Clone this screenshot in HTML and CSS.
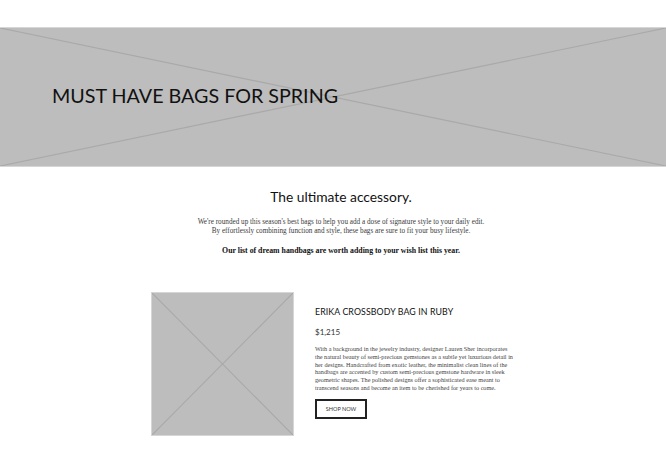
FILE: index.html
```html
<!DOCTYPE html>
<html>
<head>
<meta charset="utf-8">
<link rel="stylesheet" href="styles.css">
</head>
<body>
<header class="hero">
  <svg class="ph-lines" viewBox="0 0 100 100" preserveAspectRatio="none" aria-hidden="true">
    <line x1="0" y1="0" x2="100" y2="100" vector-effect="non-scaling-stroke"/>
    <line x1="100" y1="0" x2="0" y2="100" vector-effect="non-scaling-stroke"/>
  </svg>
  <h1 class="hero-title">MUST HAVE BAGS FOR SPRING</h1>
</header>

<section class="intro">
  <h2 class="intro-title">The ultimate accessory.</h2>
  <p class="intro-text">We're rounded up this season's best bags to help you add a dose of signature style to your daily edit.<br>By effortlessly combining function and style, these bags are sure to fit your busy lifestyle.</p>
  <p class="intro-bold">Our list of dream handbags are worth adding to your wish list this year.</p>
</section>

<section class="product">
  <div class="product-img">
    <svg class="ph-lines" viewBox="0 0 100 100" preserveAspectRatio="none" aria-hidden="true">
      <line x1="0" y1="0" x2="100" y2="100" vector-effect="non-scaling-stroke"/>
      <line x1="100" y1="0" x2="0" y2="100" vector-effect="non-scaling-stroke"/>
    </svg>
  </div>
  <div class="product-info">
    <h3 class="product-name">ERIKA CROSSBODY BAG IN RUBY</h3>
    <div class="product-price">$1,215</div>
    <p class="product-desc">With a background in the jewelry industry, designer Lauren Sher incorporates the natural beauty of semi-precious gemstones as a subtle yet luxurious detail in her designs. Handcrafted from exotic leather, the minimalist clean lines of the handbags are accented by custom semi-precious gemstone hardware in sleek geometric shapes. The polished designs offer a sophisticated ease meant to transcend seasons and become an item to be cherished for years to come.</p>
    <a class="btn" href="#">SHOP NOW</a>
  </div>
</section>
</body>
</html>
```

FILE: styles.css
```css
html, body {
  margin: 0;
  padding: 0;
  background: #fff;
}
body {
  padding-top: 27px;
  font-family: "Lato", "Liberation Sans", sans-serif;
  color: #1a1a1a;
}
.hero {
  position: relative;
  height: 138px;
  background: #bdbdbd;
  border: 1px solid #d6d6d6;
  border-left: 0;
  border-right: 0;
  display: flex;
  align-items: center;
  padding-left: 52px;
  box-sizing: content-box;
  overflow: hidden;
}
.ph-lines {
  position: absolute;
  inset: 0;
  width: 100%;
  height: 100%;
}
.ph-lines line {
  stroke: #a9a9a9;
  stroke-width: 1.2;
}
.hero-title {
  position: relative;
  margin: 0 0 4px;
  font-weight: 400;
  font-size: 19.7px;
  color: #111;
}
.intro {
  text-align: center;
  padding-top: 21px;
  padding-left: 16px;
}
.intro-title {
  margin: 0;
  font-weight: 400;
  font-size: 13.8px;
  color: #111;
}
.intro-text {
  margin: 13px 0 0;
  font-family: "Liberation Serif", serif;
  font-size: 7.2px;
  line-height: 9px;
  color: #3a3a3a;
}
.intro-bold {
  margin: 10px 0 0;
  font-family: "Liberation Serif", serif;
  font-weight: 700;
  font-size: 7.8px;
  color: #111;
}
.product {
  display: flex;
  gap: 21px;
  padding-left: 151px;
  margin-top: 37px;
}
.product-img {
  position: relative;
  width: 141px;
  height: 142px;
  background: #bdbdbd;
  border: 1px solid #d6d6d6;
  flex: none;
}
.product-info {
  width: 201px;
  padding-top: 14px;
}
.product-name {
  margin: 0;
  font-weight: 400;
  font-size: 8.8px;
  letter-spacing: 0.1px;
  color: #111;
}
.product-price {
  margin-top: 10px;
  font-size: 8px;
  color: #333;
}
.product-desc {
  margin: 8px 0 0;
  font-family: "Liberation Serif", serif;
  font-size: 6.2px;
  line-height: 7.8px;
  color: #444;
}
.btn {
  display: inline-block;
  margin-top: 7px;
  width: 48px;
  height: 16px;
  border: 2px solid #222;
  font-size: 5.5px;
  line-height: 16px;
  text-align: center;
  color: #333;
  text-decoration: none;
}
```
